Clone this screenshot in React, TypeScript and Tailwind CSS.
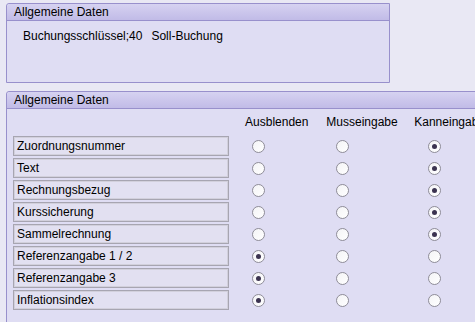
import React from 'react';

const rows: { label: string; sel: number }[] = [
  { label: 'Zuordnungsnummer', sel: 2 },
  { label: 'Text', sel: 2 },
  { label: 'Rechnungsbezug', sel: 2 },
  { label: 'Kurssicherung', sel: 2 },
  { label: 'Sammelrechnung', sel: 2 },
  { label: 'Referenzangabe 1 / 2', sel: 0 },
  { label: 'Referenzangabe 3', sel: 0 },
  { label: 'Inflationsindex', sel: 0 },
];

const Radio: React.FC<{ on: boolean }> = ({ on }) => (
  <div className="w-[13px] h-[13px] rounded-full border border-[#8f8d98] bg-gradient-to-br from-[#f4f4f6] to-white flex items-center justify-center">
    {on && <div className="w-[5px] h-[5px] rounded-full bg-[#3b3350]" />}
  </div>
);

const Header: React.FC<{ title: string }> = ({ title }) => (
  <div className="h-[17px] bg-gradient-to-b from-[#d6d2f1] to-[#c1bbe7] border-b border-[#9890cc] rounded-tl-[3px] pl-[7px] flex items-center text-[12px] leading-none">
    {title}
  </div>
);

export default function App() {
  return (
    <div
      className="w-[475px] h-[322px] overflow-hidden bg-[#e9e8f4] text-black pt-[3px] pl-[6px]"
      style={{ fontFamily: '"Liberation Sans", Arial, sans-serif' }}
    >
      {/* Panel 1 */}
      <div className="w-[384px] h-[80px] border border-[#9890cc] rounded-tl-[3px] bg-[#dfddf3] flex flex-col">
        <Header title="Allgemeine Daten" />
        <div className="pl-[16px] pt-[6px] text-[12px] flex gap-[9px]">
          <span>Buchungsschlüssel;40</span>
          <span>Soll-Buchung</span>
        </div>
      </div>

      {/* Panel 2 */}
      <div className="mt-[8px] w-[480px] h-[240px] border border-[#9890cc] rounded-tl-[3px] bg-[#dfddf3] flex flex-col">
        <Header title="Allgemeine Daten" />
        <div className="pl-[6px] text-[12px]">
          <div className="h-[27px] flex items-end pb-[5px]">
            <div className="w-[240px]" />
            <div className="w-[84px]">Ausblenden</div>
            <div className="w-[91px]">Musseingabe</div>
            <div className="whitespace-nowrap">Kanneingabe</div>
          </div>
          <div className="flex flex-col gap-[2px]">
            {rows.map((r) => (
              <div key={r.label} className="h-[20px] flex items-center">
                <div className="w-[216px] h-[20px] border border-[#a7a5b1] shadow-[inset_0_0_0_1px_#d2d0dc] bg-[#e2e0f1] pl-[3px] flex items-center mr-[23px]">
                  {r.label}
                </div>
                {[0, 1, 2].map((c) => (
                  <div key={c} className={c === 0 ? 'w-[84px]' : c === 1 ? 'w-[92px]' : 'w-[40px]'}>
                    <Radio on={r.sel === c} />
                  </div>
                ))}
              </div>
            ))}
          </div>
        </div>
      </div>
    </div>
  );
}
